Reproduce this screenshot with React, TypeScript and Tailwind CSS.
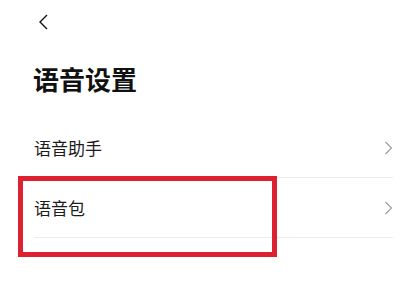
import React from "react";

function ChevronRight() {
  return (
    <svg width="9" height="14" viewBox="0 0 9 14" fill="none" className="shrink-0">
      <path d="M1.5 1 L7.5 7 L1.5 13" stroke="#9a9a9a" strokeWidth="1.1" />
    </svg>
  );
}

function SettingRow({ label }: { label: string }) {
  return (
    <div className="flex h-[60px] items-center justify-between border-b border-[#ececec]">
      <span className="text-[17px] leading-none text-[#1c1c1c]">{label}</span>
      <ChevronRight />
    </div>
  );
}

export default function App() {
  return (
    <div
      className="relative h-[281px] w-[414px] overflow-hidden bg-white"
      style={{ fontFamily: '"Noto Sans CJK SC", "Noto Sans", sans-serif' }}
    >
      <div className="flex h-[44px] items-center pl-[37px]">
        <svg width="12" height="16" viewBox="0 0 12 16" fill="none">
          <path d="M10 1 L3 8 L10 15" stroke="#111" strokeWidth="1.4" />
        </svg>
      </div>

      <div className="mt-[16px] h-[37px] pl-[33px]">
        <h1 className="text-[26px] font-bold leading-[37px] text-[#111]">语音设置</h1>
      </div>

      <div className="ml-[34px] mr-[21px] mt-[21px]">
        <SettingRow label="语音助手" />
        <SettingRow label="语音包" />
      </div>

      <div className="absolute left-[18px] top-[176px] h-[81px] w-[259px] border-[5px] border-[#dd2130]" />
    </div>
  );
}
